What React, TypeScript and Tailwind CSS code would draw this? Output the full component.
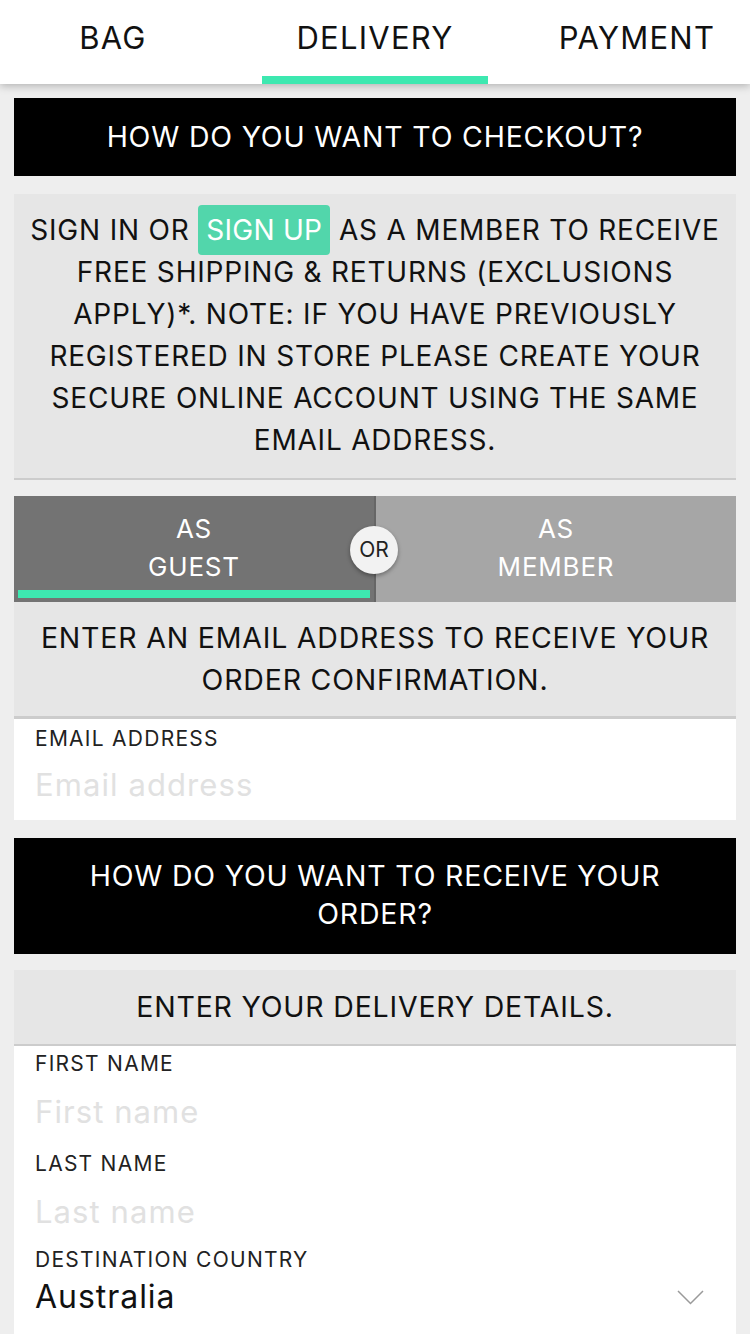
import React from "react";

const font = { fontFamily: "Inter, 'Noto Sans', sans-serif" };

function Field({ label, placeholder, last }: { label: string; placeholder: string; last?: boolean }) {
  return (
    <div className={last ? "h-[96px]" : "h-[100px]"}>
      <div className="h-[24px] leading-[24px] text-[21px] tracking-[0.06em] text-[#222] uppercase">{label}</div>
      <div className="mt-[11px] h-[50px] leading-[50px] text-[31px] tracking-[0.035em] text-[#e1e1e1]">{placeholder}</div>
    </div>
  );
}

export default function App() {
  return (
    <div className="min-h-[1334px] w-[750px] overflow-hidden bg-[#eeeeee] text-[#111]" style={font}>
      {/* Header tabs */}
      <div className="relative z-10 h-[84px] overflow-hidden bg-white shadow-[0_2px_8px_rgba(0,0,0,0.25)]">
        <div className="-ml-[18px] flex h-full w-[786px] text-[31px] leading-[40px] tracking-[0.04em]">
          <div className="flex w-[262px] shrink-0 justify-center pt-[18px]">BAG</div>
          <div className="flex w-[262px] shrink-0 flex-col items-center">
            <div className="pt-[18px]">DELIVERY</div>
            <div className="mt-auto h-[8px] w-[226px] bg-[#3de8b0]"></div>
          </div>
          <div className="flex w-[262px] shrink-0 justify-center pt-[18px]">PAYMENT</div>
        </div>
      </div>

      <div className="px-[14px] pt-[14px] tracking-[0.05em]">
        {/* Checkout title */}
        <div className="flex h-[78px] items-center justify-center bg-black text-[28.5px] text-white">
          HOW DO YOU WANT TO CHECKOUT?
        </div>

        {/* Info box */}
        <div className="mt-[18px] h-[286px] border-b-[2px] border-[#cccccc] bg-[#e6e6e6] pt-[15px] text-center text-[28px] leading-[42px] whitespace-nowrap">
          SIGN IN OR{" "}
          <span className="rounded-[4px] bg-[#52d6ab] px-[8px] py-[8px] tracking-[0.01em] text-white">SIGN UP</span>{" "}
          AS A MEMBER TO RECEIVE
          <br />
          FREE SHIPPING &amp; RETURNS (EXCLUSIONS
          <br />
          APPLY)*. NOTE: IF YOU HAVE PREVIOUSLY
          <br />
          REGISTERED IN STORE PLEASE CREATE YOUR
          <br />
          SECURE ONLINE ACCOUNT USING THE SAME
          <br />
          EMAIL ADDRESS.
        </div>

        {/* Guest/member toggle */}
        <div className="relative mt-[16px] flex h-[106px] text-white">
          <div className="flex w-[360px] flex-col items-center bg-[#737373] px-[4px] pt-[14px] pb-[4px]">
            <div className="text-center text-[26px] leading-[38px]">
              AS
              <br />
              GUEST
            </div>
            <div className="mt-auto h-[8px] w-full bg-[#3de8b0]"></div>
          </div>
          <div className="w-[2px] bg-[#666666]"></div>
          <div className="flex flex-1 flex-col items-center bg-[#a6a6a6] pt-[14px]">
            <div className="text-center text-[26px] leading-[38px]">
              AS
              <br />
              MEMBER
            </div>
          </div>
          <div className="absolute top-[30px] left-[336px] flex h-[48px] w-[48px] items-center justify-center rounded-full bg-[#f2f2f2] text-[21px] tracking-normal text-[#222] shadow-[0_2px_4px_rgba(0,0,0,0.35)]">
            OR
          </div>
        </div>

        <div className="h-[117px] border-b-[3px] border-[#cccccc] bg-[#e6e6e6] pt-[15px] text-center text-[28.5px] leading-[42px] whitespace-nowrap">
          ENTER AN EMAIL ADDRESS TO RECEIVE YOUR
          <br />
          ORDER CONFIRMATION.
        </div>
        <div className="h-[101px] bg-white px-[21px] pt-[8px]">
          <div className="h-[24px] leading-[24px] text-[21px] tracking-[0.06em] text-[#222]">EMAIL ADDRESS</div>
          <div className="mt-[9px] h-[50px] leading-[50px] text-[31px] tracking-[0.035em] text-[#e1e1e1]">Email address</div>
        </div>

        {/* Receive order title */}
        <div className="mt-[18px] h-[116px] bg-black pt-[19px] text-center text-[28.5px] leading-[38px] text-white">
          HOW DO YOU WANT TO RECEIVE YOUR
          <br />
          ORDER?
        </div>

        <div className="mt-[16px] flex h-[76px] items-center justify-center border-b-[2px] border-[#cccccc] bg-[#e6e6e6] text-[28.5px]">
          ENTER YOUR DELIVERY DETAILS.
        </div>
        <div className="bg-white px-[21px] pt-[6px]">
          <Field label="First name" placeholder="First name" />
          <Field label="Last name" placeholder="Last name" last />
          <div className="h-[24px] leading-[24px] text-[21px] tracking-[0.06em] text-[#222]">DESTINATION COUNTRY</div>
          <div className="flex h-[50px] items-center justify-between pr-[11px]">
            <span className="text-[32px] tracking-[0.03em] text-[#111]">Australia</span>
            <svg width="27" height="15" viewBox="0 0 27 15" fill="none">
              <path d="M1 1L13.5 13.5L26 1" stroke="#9a9a9a" strokeWidth="1.5" />
            </svg>
          </div>
          <div className="h-[20px]"></div>
        </div>
      </div>
    </div>
  );
}
